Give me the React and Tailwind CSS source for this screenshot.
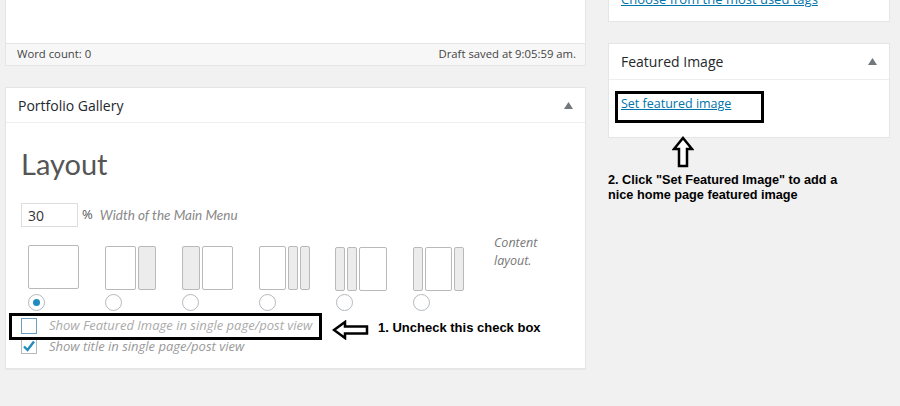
import React from 'react';

const wp = { fontFamily: '"Open Sans", "Noto Sans", sans-serif' };
const ann = { fontFamily: '"Liberation Sans", Arial, sans-serif' };

function Box({ w, side }) {
  return (
    <div
      className={`h-full rounded-[2px] border border-[#b9b9b9] ${side ? 'bg-[#ececec]' : 'bg-white'}`}
      style={{ width: w }}
    />
  );
}

const layouts = [
  { y: 0, parts: [[51, false]] },
  { y: 1, parts: [[31, false], [18, true]] },
  { y: 1, parts: [[18, true], [31, false]] },
  { y: 1, parts: [[27, false], [10, true], [10, true]] },
  { y: 2, parts: [[10, true], [10, true], [28, false]] },
  { y: 2, parts: [[10, true], [27, false], [10, true]] },
];

function Radio({ checked }) {
  return (
    <div className="w-[17px] h-[17px] rounded-full border border-[#b4b9be] bg-white flex items-center justify-center">
      {checked && <div className="w-[7px] h-[7px] rounded-full bg-[#1e8cbe]" />}
    </div>
  );
}

function Checkbox({ checked, focus }) {
  return (
    <div className={`w-[16px] h-[16px] border bg-white flex items-center justify-center shrink-0 ${focus ? 'border-[#6c9ec4]' : 'border-[#b4b9be]'}`}>
      {checked && (
        <svg width="14" height="14" viewBox="0 0 14 14">
          <path d="M2 7.5 L5.5 11 L12 2.5" fill="none" stroke="#1e8cbe" strokeWidth="2.4" />
        </svg>
      )}
    </div>
  );
}

function Triangle() {
  return (
    <svg width="9" height="7" viewBox="0 0 9 7">
      <path d="M0 7 L4.5 0 L9 7 Z" fill="#72777c" />
    </svg>
  );
}

export default function App() {
  return (
    <div className="relative w-[900px] h-[406px] overflow-hidden bg-[#f1f1f1] flex" style={wp}>
      {/* left column */}
      <div className="ml-[5px] w-[581px] flex flex-col">
        <div className="h-[43px] bg-white border-x border-[#e5e5e5]" />
        <div className="h-[23px] bg-[#f7f7f7] border border-[#e5e5e5] flex items-center justify-between pl-[11px] pr-[9px] text-[11.3px] text-[#444]">
          <span>Word count: 0</span>
          <span>Draft saved at 9:05:59 am.</span>
        </div>

        <div className="mt-[21px] h-[282px] bg-white border border-[#e5e5e5] shadow-[0_1px_1px_rgba(0,0,0,0.04)] flex flex-col">
          <div className="h-[35px] border-b border-[#eeeeee] flex items-center justify-between pl-[12px] pr-[12px]">
            <span className="text-[14px] text-[#23282d]">Portfolio Gallery</span>
            <Triangle />
          </div>
          <div className="relative flex-1 pl-[15px]">
            <div className="mt-[24px] text-[29px] leading-[34px] text-[#555]" style={{ fontFamily: 'Lato, sans-serif' }}>
              Layout
            </div>
            <div className="mt-[22px] flex items-center">
              <div className="w-[57px] h-[24px] border border-[#dddddd] flex items-center pl-[6px] text-[14px] text-[#333]">30</div>
              <span className="ml-[4px] text-[13px] text-[#555]">%</span>
              <span className="ml-[7px] text-[13.5px] italic text-[#888]" style={{ fontFamily: 'Lato, sans-serif' }}>
                Width of the Main Menu
              </span>
            </div>
            <div className="mt-[18px] flex">
              <div className="flex gap-[25px] ml-[6px]">
                {layouts.map((l, i) => (
                  <div key={i} className="w-[52px] flex flex-col items-center">
                    <div className="h-[44px] flex gap-[2px]" style={{ marginTop: l.y }}>
                      {l.parts.map(([w, s], j) => (
                        <Box key={j} w={w} side={s} />
                      ))}
                    </div>
                    <div className="ml-[-34px]" style={{ marginTop: 5 - l.y }}>
                      <Radio checked={i === 0} />
                    </div>
                  </div>
                ))}
              </div>
              <div className="ml-[30px] mt-[-11px] text-[12.5px] italic leading-[18px] text-[#777]">
                Content
                <br />
                layout.
              </div>
            </div>
            <div className="mt-[5px] flex items-center gap-[12px] text-[13px] italic text-[#aaa]">
              <Checkbox focus />
              <span>Show Featured Image in single page/post view</span>
            </div>
            <div className="mt-[1px] flex items-center gap-[12px] text-[13px] italic text-[#999]">
              <Checkbox checked />
              <span>Show title in single page/post view</span>
            </div>
          </div>
        </div>
      </div>

      {/* right column */}
      <div className="ml-[22px] w-[282px] flex flex-col">
        <div className="h-[22px] bg-white border-x border-b border-[#e5e5e5] relative overflow-hidden">
          <span className="absolute left-[12px] top-[-10px] text-[13px] text-[#0073aa] underline">
            Choose from the most used tags
          </span>
        </div>
        <div className="mt-[21px] h-[95px] bg-white border border-[#e5e5e5] flex flex-col">
          <div className="h-[36px] border-b border-[#eeeeee] flex items-center justify-between pl-[12px] pr-[12px]">
            <span className="text-[14px] text-[#23282d]">Featured Image</span>
            <Triangle />
          </div>
          <div className="pl-[12px] pt-[10px]">
            <span className="text-[12.5px] text-[#0073aa] underline">Set featured image</span>
          </div>
        </div>
        <div className="mt-[35px] text-[12.7px] font-bold leading-[15px] text-black" style={ann}>
          2. Click "Set Featured Image" to add a
          <br />
          nice home page featured image
        </div>
      </div>

      {/* annotations */}
      <div className="absolute left-[9px] top-[313px] w-[313px] h-[27px] border-[3px] border-black" />
      <div className="absolute left-[615px] top-[91px] w-[149px] h-[32px] border-[3px] border-black" />
      <svg className="absolute left-[332px] top-[320px]" width="37" height="20" viewBox="0 0 37 20">
        <path d="M2 10 L13 2 L13 6.5 L35 6.5 L35 13.5 L13 13.5 L13 18 Z" fill="white" stroke="black" strokeWidth="2.5" strokeLinejoin="miter" />
      </svg>
      <svg className="absolute left-[672px] top-[136px]" width="22" height="32" viewBox="0 0 22 32">
        <path d="M11 2 L20 13 L15 13 L15 30 L7 30 L7 13 L2 13 Z" fill="white" stroke="black" strokeWidth="2.5" />
      </svg>
      <div className="absolute left-[378px] top-[318px] text-[13px] font-bold text-black" style={ann}>
        1. Uncheck this check box
      </div>
    </div>
  );
}
